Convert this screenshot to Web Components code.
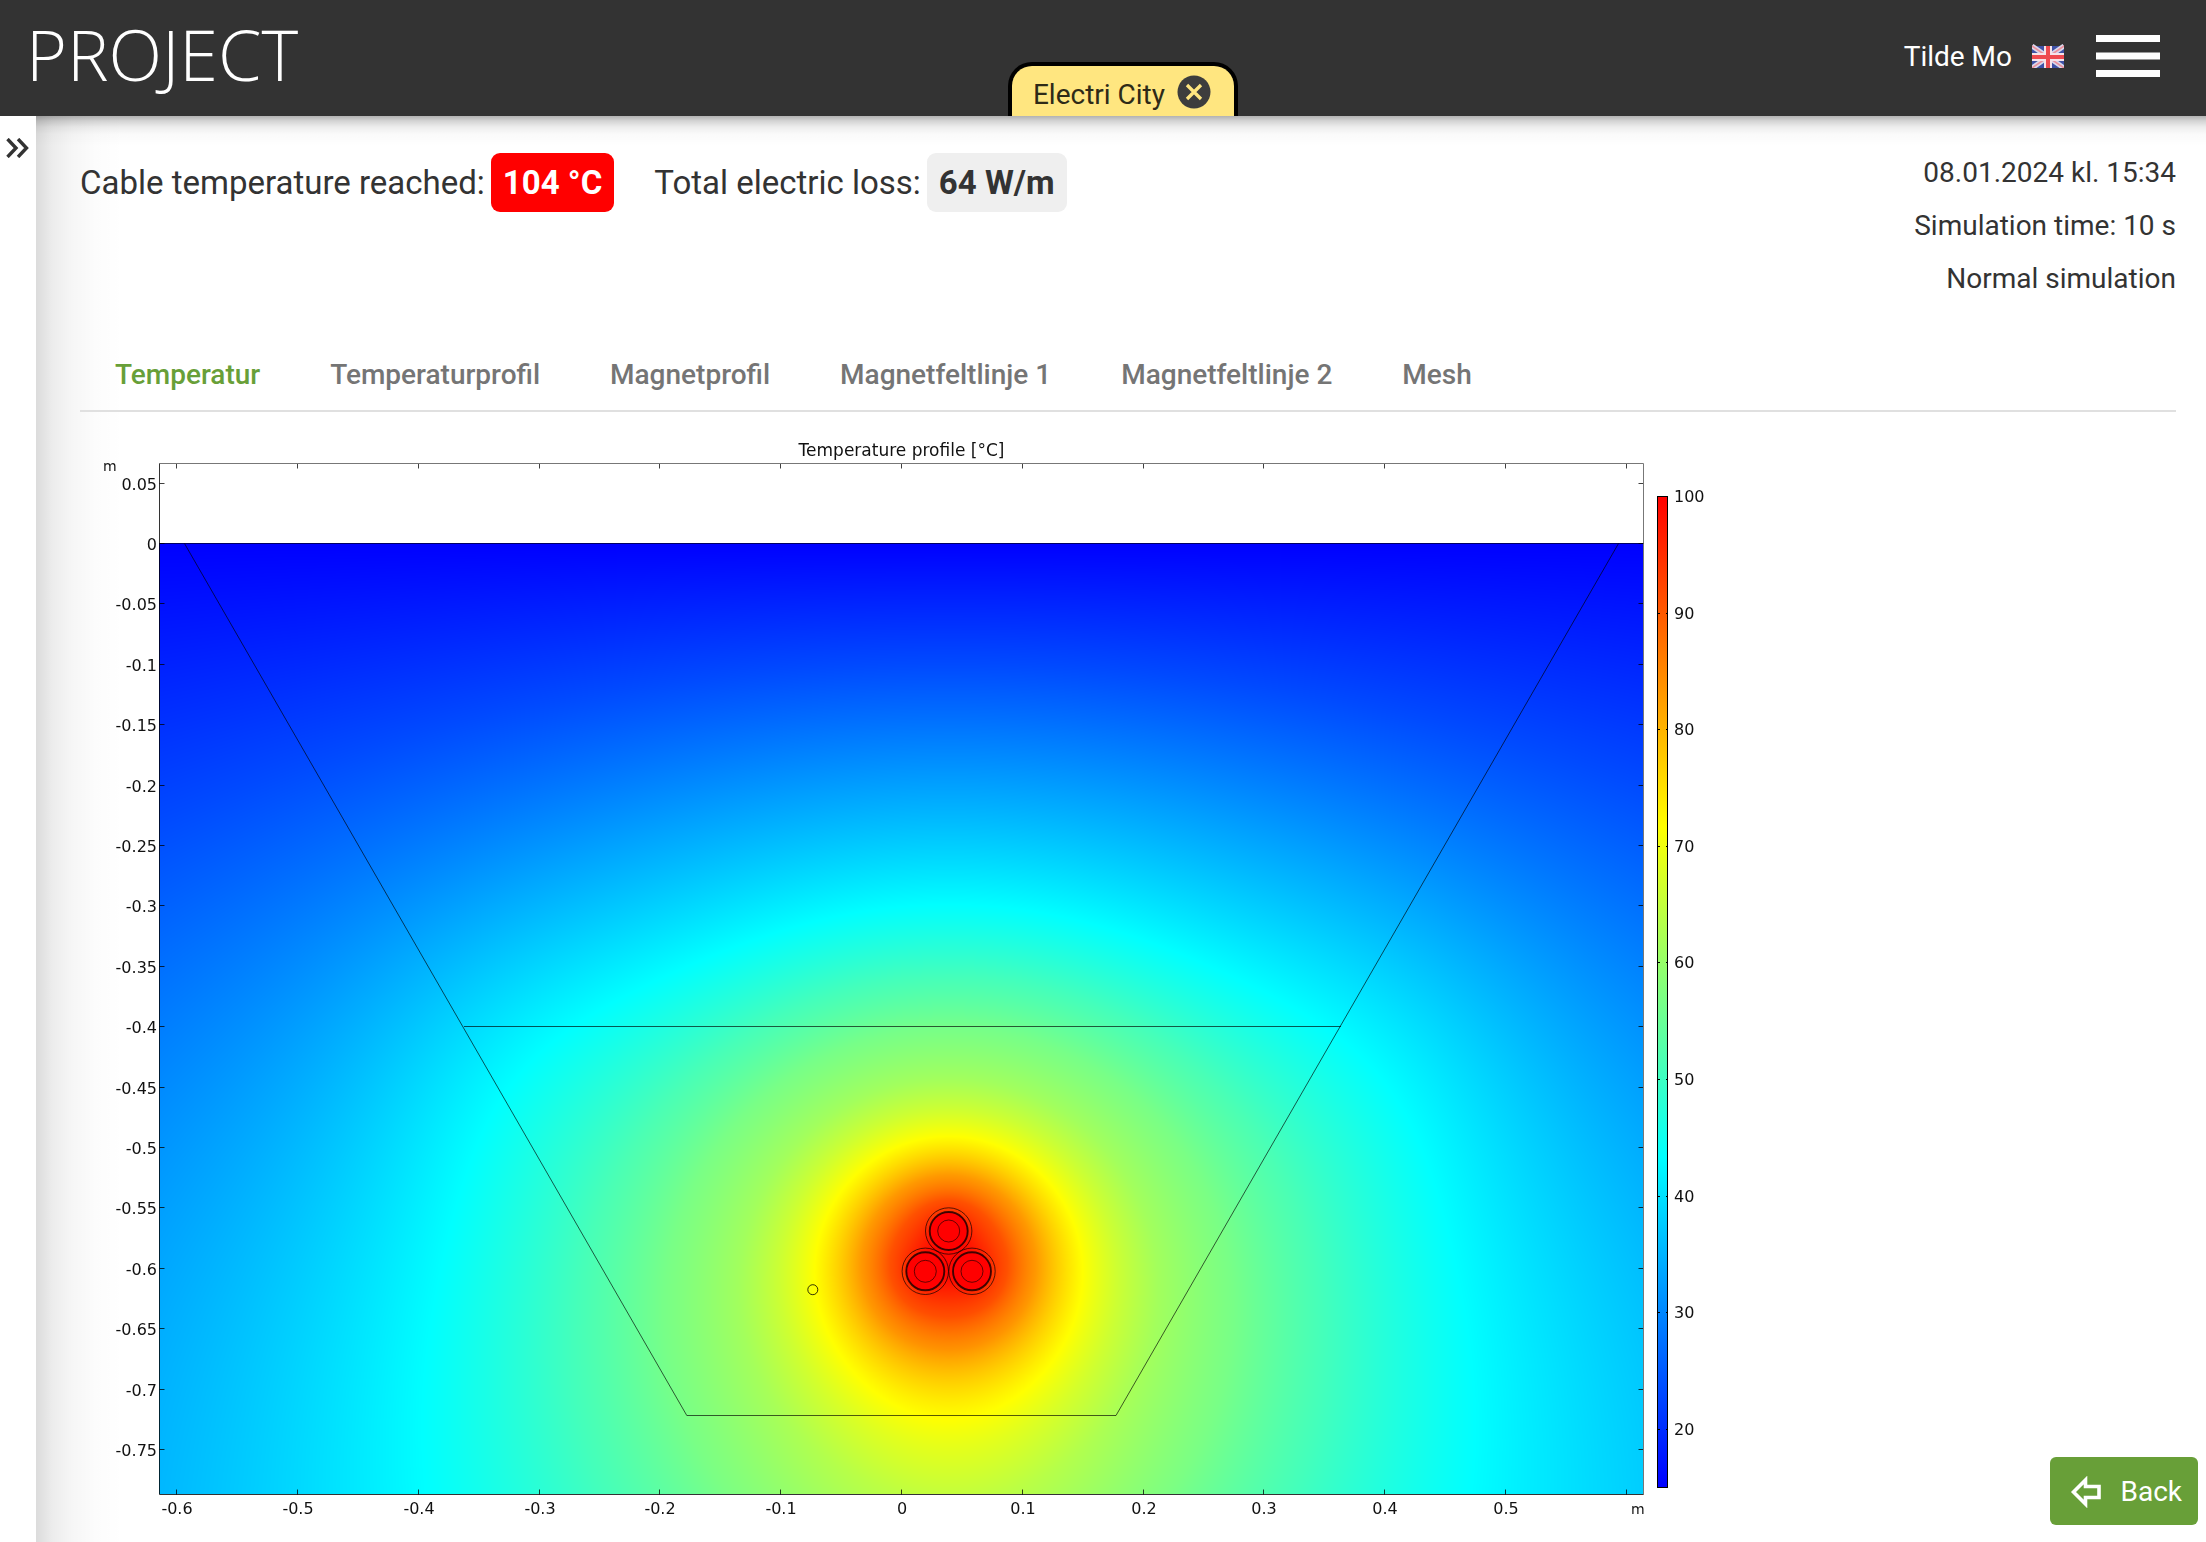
<!DOCTYPE html>
<html lang="en">
<head>
<meta charset="utf-8">
<meta name="viewport" content="width=device-width, initial-scale=1">
<title>Project – Electri City</title>
<style>
  html, body { height: 100%; }
  body { margin: 0; background: #fff; color: #333; font-family: Roboto, "Liberation Sans", sans-serif; font-size: 28px; overflow: hidden; }
</style>
</head>
<body>
<cable-app></cable-app>

<template id="t-app">
  <style>
    :host { display: flex; flex-direction: column; min-height: 100vh; }
    .body { display: flex; flex: 1; }
    main {
      flex: 1; min-width: 0; box-sizing: border-box; padding: 30px 30px 0 44px;
      background:
        linear-gradient(to bottom, rgba(0,0,0,.3), rgba(0,0,0,.17) 5px, rgba(0,0,0,.07) 11px, rgba(0,0,0,.02) 18px, rgba(0,0,0,0) 30px),
        linear-gradient(to right, rgba(0,0,0,.14), rgba(0,0,0,.075) 16px, rgba(0,0,0,.035) 36px, rgba(0,0,0,.01) 60px, rgba(0,0,0,0) 88px),
        #fff;
    }
    .summary { display: flex; justify-content: space-between; align-items: flex-start; }
    .stats { display: flex; gap: 40px; padding-top: 7px; }
    tab-bar { margin-top: 33px; }
    heat-plot { margin-top: 24px; }
  </style>
  <app-header>
    <project-chip slot="project">Electri City</project-chip>
    <span slot="user">Tilde Mo</span>
  </app-header>
  <div class="body">
    <side-rail></side-rail>
    <main>
      <div class="summary">
        <div class="stats">
          <stat-item level="alert">Cable temperature reached:<span slot="value">104 °C</span></stat-item>
          <stat-item>Total electric loss:<span slot="value">64 W/m</span></stat-item>
        </div>
        <run-meta>
          <span>08.01.2024 kl. 15:34</span>
          <span>Simulation time: 10 s</span>
          <span>Normal simulation</span>
        </run-meta>
      </div>
      <tab-bar tabs="Temperatur|Temperaturprofil|Magnetprofil|Magnetfeltlinje 1|Magnetfeltlinje 2|Mesh"></tab-bar>
      <heat-plot></heat-plot>
    </main>
  </div>
  <back-button>Back</back-button>
</template>

<template id="t-header">
  <style>
    :host { display: grid; grid-template-columns: 1fr auto 1fr; height: 116px; background: #333; color: #fff; }
    .logo { align-self: start; padding: 6px 0 0 26px; font: 300 70px/96px "Open Sans", sans-serif; color: #fff; text-decoration: none; }
    ::slotted(project-chip) { align-self: end; margin-left: 40px; }
    .right { display: flex; justify-content: flex-end; align-items: center; padding-right: 46px; height: 112px; }
    button { font: inherit; color: inherit; background: none; border: 0; padding: 0; cursor: pointer; display: flex; align-items: center; }
    .user { gap: 20px; margin-right: 32px; }
    svg { display: block; }
  </style>
  <a class="logo" href="#">PROJECT</a>
  <slot name="project"></slot>
  <div class="right">
    <button class="user" type="button"><slot name="user"></slot>
      <svg width="32" height="24" viewBox="0 -2 32 24" aria-hidden="true">
        <rect width="32" height="22" fill="#3f51a6"/>
        <path d="M0 0L32 22M32 0L0 22" stroke="#d9d8ec" stroke-width="5"/>
        <path d="M0 0L32 22M32 0L0 22" stroke="#ec8f9b" stroke-width="1.6"/>
        <path d="M16 0V22M0 11H32" stroke="#f6e4ea" stroke-width="8"/>
        <path d="M16 0V22M0 11H32" stroke="#ee4a50" stroke-width="4"/>
      </svg>
    </button>
    <button type="button" aria-label="Menu">
      <svg width="64" height="42" viewBox="0 0 64 42"><path d="M0 0H64V7H0zM0 17.500H64V24.500H0zM0 35H64V42H0z" fill="#fff"/></svg>
    </button>
  </div>
</template>

<template id="t-chip">
  <style>
    :host { display: flex; align-items: flex-start; gap: 12px; box-sizing: border-box; height: 54px; padding: 9px 23px 0 21px; border: 4px solid #000; border-bottom: 0; border-radius: 24px 24px 0 0; background: #ffe680; color: #2e2a17; line-height: 40px; }
    button { border: 0; padding: 0; background: none; cursor: pointer; }
    svg { display: block; }
  </style>
  <span><slot></slot></span>
  <button type="button" aria-label="Close project">
    <svg width="34" height="34" viewBox="0 0 34 34"><circle cx="17" cy="17" r="16.500" fill="#3d3d3d"/><path d="M10 10L24 24M24 10L10 24" stroke="#ffe680" stroke-width="3.300"/></svg>
  </button>
</template>

<template id="t-rail">
  <style>
    :host { display: block; width: 36px; background: #fff; }
    button { display: block; width: 36px; padding: 22px 0 0 6px; border: 0; background: none; cursor: pointer; }
    svg { display: block; }
  </style>
  <button type="button" aria-label="Expand sidebar">
    <svg width="24" height="20" viewBox="0 0 24 20" fill="none" stroke="#333" stroke-width="3.400"><path d="M1.500 1L10 10L1.500 19M12 1L20.500 10L12 19"/></svg>
  </button>
</template>

<template id="t-stat">
  <style>
    :host { display: flex; align-items: center; gap: 6px; font-size: 33px; line-height: 59px; white-space: nowrap; }
    .value { padding: 0 12px; border-radius: 9px; background: #efefef; font-weight: 700; }
    :host([level="alert"]) .value { background: #f00; color: #fff; }
  </style>
  <span><slot></slot></span><span class="value"><slot name="value"></slot></span>
</template>

<template id="t-meta">
  <style>
    :host { display: flex; flex-direction: column; align-items: flex-end; line-height: 53px; white-space: nowrap; }
  </style>
  <slot></slot>
</template>

<template id="t-tabs">
  <style>
    :host { display: block; border-bottom: 2px solid #e0e0e0; }
    div { display: flex; }
    button { font: 500 28px/34px Roboto, sans-serif; color: #757575; background: none; border: 0; padding: 20px 35px 18px; cursor: pointer; white-space: nowrap; }
    button[aria-selected="true"] { color: #689f38; }
  </style>
  <div role="tablist"></div>
</template>

<template id="t-plot">
  <style>
    :host { display: grid; justify-content: start; grid-template-columns: minmax(0, 1640px); }
    canvas, svg { grid-area: 1 / 1; width: 100%; height: auto; display: block; }
    text { font-family: "DejaVu Sans", sans-serif; font-size: 16px; fill: #111; }
    text.unit { font-size: 14px; }
    text.title { font-size: 17px; }
    .end { text-anchor: end; }
    .mid { text-anchor: middle; }
  </style>
  <canvas width="1640" height="1090"></canvas>
  <svg viewBox="80 436 1640 1090" role="img" aria-label="Temperature profile"></svg>
</template>

<template id="t-back">
  <style>
    :host { position: fixed; right: 8px; bottom: 17px; display: block; }
    button { display: flex; align-items: center; gap: 19px; height: 68px; padding: 2px 16px 0 20px; border: 0; border-radius: 6px; background: #689f38; color: #fff; font: 400 28px/34px Roboto, sans-serif; cursor: pointer; }
    svg { display: block; }
  </style>
  <button type="button">
    <svg width="31" height="32" viewBox="0 0 31 32" fill="none" stroke="#fff" stroke-width="3.600"><path d="M3.500 16L15.500 4V10.500H29V21.500H15.500V28z"/></svg>
    <span><slot></slot></span>
  </button>
</template>

<script>
class Base extends HTMLElement {
  constructor() {
    super();
    this.attachShadow({ mode: "open" })
      .append(document.getElementById(this.constructor.tpl).content.cloneNode(true));
  }
}
class AppHeader extends Base { static tpl = "t-header"; }
class ProjectChip extends Base { static tpl = "t-chip"; }
class SideRail extends Base { static tpl = "t-rail"; }
class StatItem extends Base { static tpl = "t-stat"; }
class RunMeta extends Base { static tpl = "t-meta"; }
class BackButton extends Base { static tpl = "t-back"; }
class CableApp extends Base { static tpl = "t-app"; }

class TabBar extends Base {
  static tpl = "t-tabs";
  connectedCallback() {
    const list = this.shadowRoot.querySelector("div");
    if (list.childElementCount) return;
    this.getAttribute("tabs").split("|").forEach((name, i) => {
      const b = document.createElement("button");
      b.type = "button";
      b.textContent = name;
      b.setAttribute("role", "tab");
      b.setAttribute("aria-selected", i === 0);
      b.onclick = () => { for (const o of list.children) o.setAttribute("aria-selected", o === b); };
      list.append(b);
    });
  }
}

/* Geometry of the drawing; S is pixels per metre, (X0, Y0) is the origin. */
const S = 1208, X0 = 901.5, Y0 = 543.5;
const BOX = { l: 159.5, t: 463.5, r: 1643.5, b: 1494.5 };
const CABLES = [[948.7, 1231], [925.3, 1271.3], [972, 1271.3]];
/* Temperature rise over ambient as a function of the line-source potential. */
const RISE = [[0, 0], [.34, 8.2], [.7, 17.7], [1.12, 28.5], [1.4, 35.8], [1.65, 41.5], [1.94, 46.3], [2.15, 51], [2.38, 56.7], [2.56, 61.5], [2.8, 68], [3.2, 76], [3.9, 84], [6, 90]];

function rise(s) {
  for (let i = 1; i < RISE.length; i++) {
    if (s <= RISE[i][0]) {
      const [a, b] = RISE[i - 1], [c, d] = RISE[i];
      return b + (d - b) * (s - a) / (c - a);
    }
  }
  return 90;
}
const bump = (x, y, w, h) => Math.exp(-x * x / w - y * y / h);
function temperature(px, py) {
  let s = 0;
  for (const [cx, cy] of CABLES) {
    const r = Math.hypot(px - cx, py - cy);
    if (r < 19) return 104;
    s += Math.log(Math.hypot(px - cx, py + cy - 2 * Y0) / r) / 3;
  }
  const x = (px - 948.7) / S, d = (py - Y0) / S;
  return 15 + rise(s) + 2 * bump(Math.abs(x) - .36, d - .42, .02, .02) + 3.5 * bump(x, d - .79, .02, .01);
}
function rainbow(t) {
  const v = Math.min(1, Math.max(0, (t - 15) / 85)) * 3;
  if (v < 1) return [0, 255 * v, 255];
  if (v < 2) return [255 * (v - 1), 255, 255 * (2 - v)];
  return [255, 255 * (3 - v), 0];
}

class HeatPlot extends Base {
  static tpl = "t-plot";
  connectedCallback() {
    this.paintField();
    this.drawAxes();
  }
  paintField() {
    const g = this.shadowRoot.querySelector("canvas").getContext("2d");
    const w = 1484, h = 951, img = g.createImageData(w, h);
    for (let y = 0, k = 0; y < h; y++)
      for (let x = 0; x < w; x++, k += 4) {
        const c = rainbow(temperature(x + 159.5, y + Y0));
        img.data[k] = c[0]; img.data[k + 1] = c[1]; img.data[k + 2] = c[2]; img.data[k + 3] = 255;
      }
    g.putImageData(img, 159 - 80, 543 - 436);
  }
  drawAxes() {
    const { l, t, r, b } = BOX, o = [], px = v => Math.round(v) + .5;
    o.push(`<defs><linearGradient id="bar" x1="0" y1="0" x2="0" y2="1"><stop offset="0" stop-color="#f00"/><stop offset=".3333" stop-color="#ff0"/><stop offset=".6667" stop-color="#0ff"/><stop offset="1" stop-color="#00f"/></linearGradient></defs>`);
    let ticks = "";
    for (let i = -6; i <= 6; i++) {
      const x = px(X0 + i * S / 10 - .5);
      ticks += `M${x} ${t}v5M${x} ${b}v-5`;
      if (i < 6) o.push(`<text class="mid" x="${x + .5}" y="1514">${i ? i / 10 : 0}</text>`);
    }
    for (let i = -1; i <= 15; i++) {
      const y = px(Y0 + i * S / 20 - .5);
      ticks += `M${l} ${y}h5M${r} ${y}h-5`;
      o.push(`<text class="end" x="157" y="${y + 6}">${i ? -i * 5 / 100 : 0}</text>`);
    }
    o.push(`<path d="${ticks}" stroke="#000" fill="none" stroke-opacity=".75"/>`);
    o.push(`<path d="M${l} ${t}H${r}V${b}" stroke="#777" fill="none"/><path d="M${l} ${t}V${b}H${r}" stroke="#000" stroke-opacity=".8" fill="none"/><path d="M${l} ${Y0}H${r}" stroke="#000" stroke-opacity=".6"/>`);
    o.push(`<path d="M184.500 543.500L686.800 1415.500H1116L1618.500 543.500M464 1026.500H1341" fill="none" stroke="#000" stroke-opacity=".65"/>`);
    for (const [x, y] of CABLES)
      o.push(`<g fill="none" stroke="#000" stroke-opacity=".75"><circle cx="${x}" cy="${y}" r="23.200" stroke-width=".9"/><circle cx="${x}" cy="${y}" r="19" stroke-width="1.900"/><circle cx="${x}" cy="${y}" r="11" stroke-width=".8"/></g>`);
    o.push(`<circle cx="812.800" cy="1289.700" r="5" fill="none" stroke="#000" stroke-opacity=".8"/>`);
    o.push(`<rect x="1657.500" y="496.500" width="10" height="991" fill="url(#bar)" stroke="#000"/>`);
    for (let v = 100; v >= 20; v -= 10) {
      const y = px(496.500 + (100 - v) * 11.66 - .5);
      o.push(`<path d="M1657 ${y}h3M1668 ${y}h-2" stroke="#000"/><text x="1674" y="${y + 5.5}">${v}</text>`);
    }
    o.push(`<text class="mid title" x="901.500" y="456">Temperature profile [°C]</text><text class="unit" x="103" y="471">m</text><text class="unit" x="1631" y="1514">m</text>`);
    this.shadowRoot.querySelector("svg").innerHTML = o.join("");
  }
}

[["project-chip", ProjectChip], ["app-header", AppHeader], ["side-rail", SideRail], ["stat-item", StatItem],
 ["run-meta", RunMeta], ["tab-bar", TabBar], ["heat-plot", HeatPlot], ["back-button", BackButton], ["cable-app", CableApp]]
  .forEach(([n, c]) => customElements.define(n, c));
</script>
</body>
</html>
